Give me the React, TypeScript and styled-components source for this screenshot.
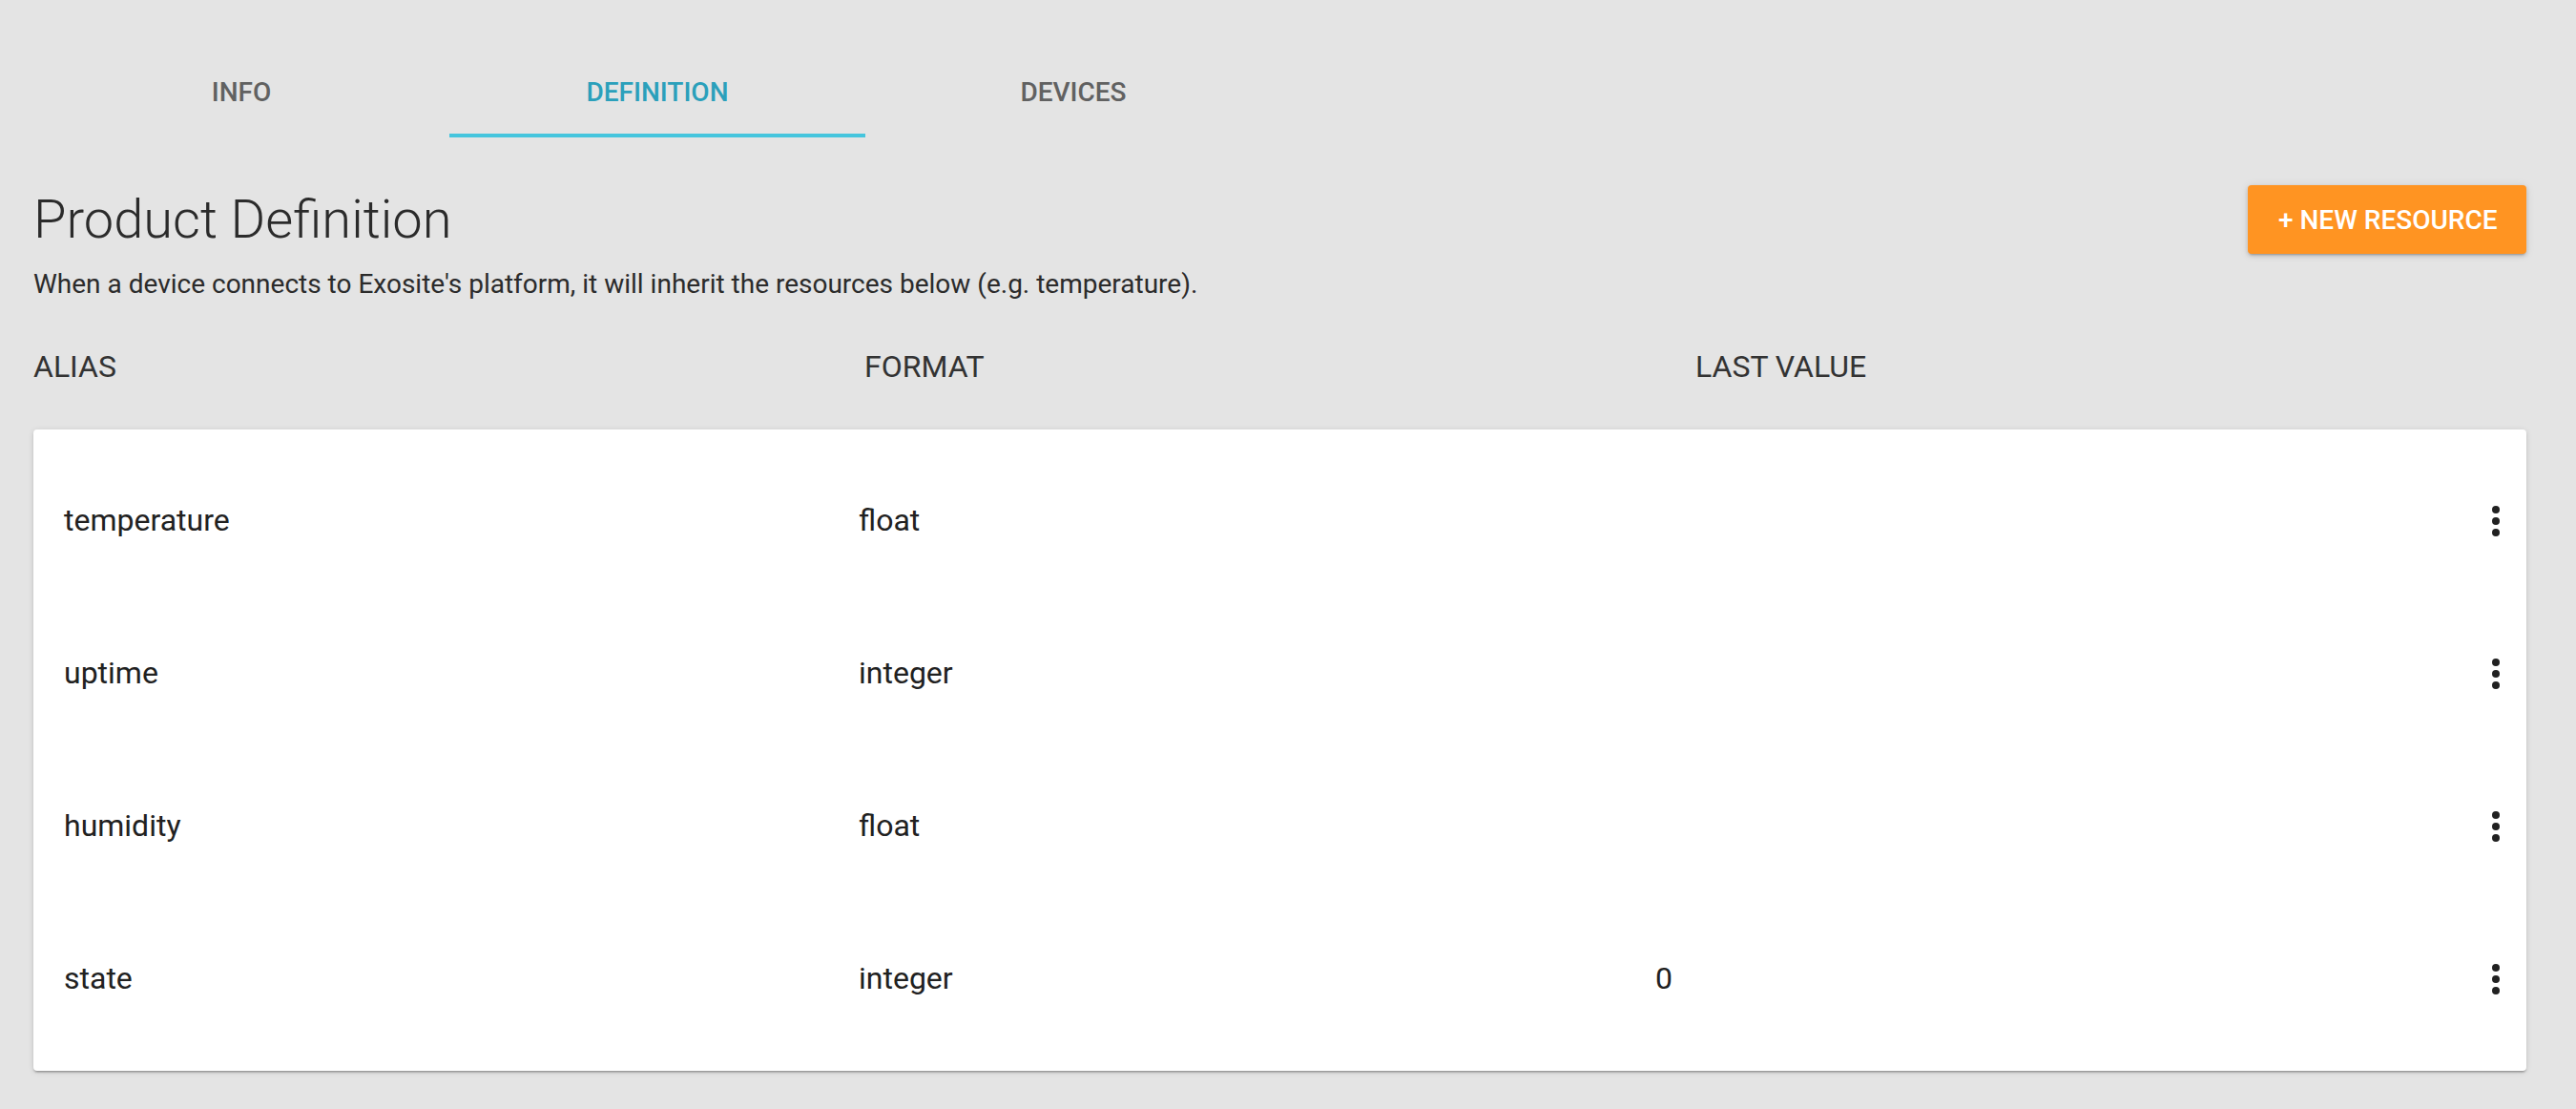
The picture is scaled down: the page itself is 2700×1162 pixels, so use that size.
import React from 'react'
import styled, { createGlobalStyle } from 'styled-components'

const GlobalStyle = createGlobalStyle`
  html, body {
    margin: 0;
    padding: 0;
    background: #e4e4e4;
    font-family: Roboto, 'Noto Sans', sans-serif;
  }
`

type Resource = { alias: string; format: string; lastValue: string }

const resources: Resource[] = [
  { alias: 'temperature', format: 'float', lastValue: '' },
  { alias: 'uptime', format: 'integer', lastValue: '' },
  { alias: 'humidity', format: 'float', lastValue: '' },
  { alias: 'state', format: 'integer', lastValue: '0' },
]

const tabs = ['Info', 'Definition', 'Devices']

const MoreIcon = () => (
  <svg width="48" height="48" viewBox="0 0 48 48">
    <circle cx="24" cy="12" r="4" fill="#212121" />
    <circle cx="24" cy="24" r="4" fill="#212121" />
    <circle cx="24" cy="36" r="4" fill="#212121" />
  </svg>
)

const App = () => {
  return (
    <>
      <GlobalStyle />
      <StyledPage>
        <StyledTabs>
          {tabs.map((t) => (
            <StyledTab key={t} active={t === 'Definition'}>
              {t}
            </StyledTab>
          ))}
        </StyledTabs>

        <StyledHeader>
          <StyledHeading>
            <StyledTitle>Product Definition</StyledTitle>
            <StyledSubtitle>
              When a device connects to Exosite's platform, it will inherit the resources below (e.g. temperature).
            </StyledSubtitle>
          </StyledHeading>
          <StyledButton>+ New Resource</StyledButton>
        </StyledHeader>

        <StyledColumns>
          <StyledLabel>Alias</StyledLabel>
          <StyledLabel>Format</StyledLabel>
          <StyledLabel>Last Value</StyledLabel>
        </StyledColumns>

        <StyledCard>
          {resources.map((r) => (
            <StyledRow key={r.alias}>
              <StyledCell>{r.alias}</StyledCell>
              <StyledCell>{r.format}</StyledCell>
              <StyledCell>{r.lastValue}</StyledCell>
              <StyledMenu>
                <MoreIcon />
              </StyledMenu>
            </StyledRow>
          ))}
        </StyledCard>
      </StyledPage>
    </>
  )
}

const StyledPage = styled.div`
  padding: 48px 52px 40px 35px;
  box-sizing: border-box;
  width: 100%;
`

const StyledTabs = styled.div`
  display: flex;
  height: 96px;
`

const StyledTab = styled.div<{ active?: boolean }>`
  width: 436px;
  height: 96px;
  display: flex;
  align-items: center;
  justify-content: center;
  font-size: 28px;
  font-weight: 500;
  text-transform: uppercase;
  color: ${(p) => (p.active ? '#2ba0bb' : '#616161')};
  box-shadow: ${(p) => (p.active ? 'inset 0 -4px 0 #45c5dd' : 'none')};
`

const StyledHeader = styled.div`
  display: flex;
  justify-content: space-between;
  align-items: flex-start;
  margin-top: 50px;
`

const StyledHeading = styled.div`
  display: flex;
  flex-direction: column;
  margin-top: 8px;
`

const StyledTitle = styled.div`
  font-size: 56px;
  font-weight: 300;
  line-height: 1;
  color: #2b2b2b;
`

const StyledSubtitle = styled.div`
  margin-top: 19px;
  font-size: 28px;
  line-height: 42px;
  color: #2b2b2b;
`

const StyledButton = styled.button`
  width: 292px;
  height: 72px;
  padding: 0 32px;
  border: none;
  border-radius: 4px;
  background: #ff9422;
  color: #fff;
  font-family: Roboto, sans-serif;
  font-size: 28px;
  font-weight: 500;
  text-transform: uppercase;
  white-space: nowrap;
  box-shadow: 0 3px 2px -2px rgba(0, 0, 0, 0.2), 0 2px 4px rgba(0, 0, 0, 0.14), 0 1px 10px rgba(0, 0, 0, 0.1);
`

const StyledColumns = styled.div`
  display: grid;
  grid-template-columns: repeat(3, 1fr);
  margin-top: 41px;
`

const StyledLabel = styled.div`
  font-size: 32px;
  line-height: 48px;
  text-transform: uppercase;
  color: #333;
`

const StyledCard = styled.div`
  margin-top: 42px;
  padding: 16px 0;
  background: #fff;
  border-radius: 4px;
  box-shadow: 0 2px 2px rgba(0, 0, 0, 0.14), 0 3px 2px -2px rgba(0, 0, 0, 0.2), 0 1px 6px rgba(0, 0, 0, 0.12);
`

const StyledRow = styled.div`
  display: grid;
  grid-template-columns: 833px 835px 1fr 48px;
  align-items: center;
  box-sizing: border-box;
  height: 160px;
  padding: 0 8px 3px 32px;
`

const StyledCell = styled.div`
  font-size: 32px;
  color: #212121;
`

const StyledMenu = styled.div`
  width: 48px;
  height: 48px;
  display: flex;
  margin-top: 3px;
`

export default App
